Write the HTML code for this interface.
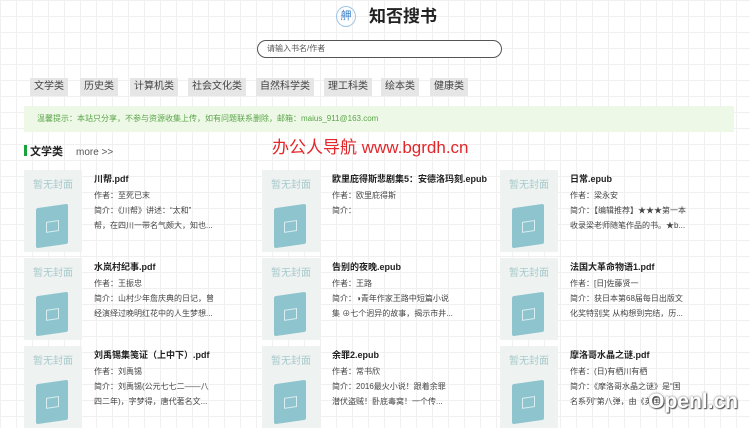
<!DOCTYPE html>
<html><head><meta charset="utf-8"><style>
*{margin:0;padding:0;box-sizing:border-box}
body{width:750px;height:420px;overflow:hidden;position:relative;font-family:"Liberation Sans","Noto Sans CJK SC",sans-serif;color:#333;
background-color:#fff;background-image:linear-gradient(#f0f0f0 1px,transparent 1px),linear-gradient(90deg,#f0f0f0 1px,transparent 1px);background-size:16px 16px}
.abs{position:absolute}
.logo{left:336px;top:6px;width:20px;height:21px;border:1px solid #9cc3e6;border-radius:50%;font-size:11px;color:#3a7fc8;text-align:center;line-height:19px}
.title{left:369px;top:6px;font-size:17px;font-weight:bold;color:#222;line-height:22px}
.search{left:257px;top:40px;width:245px;height:18px;border:1px solid #555;border-radius:9px;font-size:8px;color:#555;padding-left:9px;line-height:16px;background:#fff}
.cat{top:78px;height:18px;background:#e6e6e6;font-size:10px;color:#444;line-height:18px;padding:0 4px}
.notice{left:24px;top:106px;width:710px;height:26px;background:#eef8e6;font-size:8px;color:#5aa64a;line-height:26px;padding-left:13px}
.red{left:272px;top:137px;font-size:17px;color:#e3262a;line-height:22px}
.sec{left:24px;top:145px;font-size:11px;font-weight:bold;color:#222;line-height:14px}
.sec i{display:inline-block;width:3px;height:11px;background:#1aa33a;vertical-align:-1px;margin-right:3px}
.more{left:76px;top:146px;font-size:10px;color:#555;line-height:14px}
.card{width:230px;height:82px}
.cover{position:absolute;left:0;top:0;width:58px;height:82px;background:#eef3f1;overflow:hidden}
.cover .t{position:absolute;left:0;top:6px;width:58px;text-align:center;font-size:10px;color:#a8c9cc}
.cover .b{position:absolute;left:12px;top:36px;width:32px;height:40px;background:#8ec4cd;border-radius:2px;transform:skewY(-8deg)}
.cover .b:after{content:"";position:absolute;left:10px;top:15px;width:11px;height:9px;border:1px solid #d8eef0}
.info{position:absolute;left:70px;top:0;width:140px;font-size:8px;color:#444;line-height:15px;white-space:nowrap}
.info b{display:block;font-size:9px;color:#222;margin:3px 0 2px;line-height:13px}
.wm{right:12px;bottom:6px;font-size:21px;color:#fff;font-weight:bold;text-shadow:0 0 2px #666,1px 1px 1px #444}
</style></head><body>
<div class="abs logo">舺</div>
<div class="abs title">知否搜书</div>
<div class="abs search">请输入书名/作者</div>
<div class="abs cat" style="left:30px">文学类</div>
<div class="abs cat" style="left:80px">历史类</div>
<div class="abs cat" style="left:130px">计算机类</div>
<div class="abs cat" style="left:188px">社会文化类</div>
<div class="abs cat" style="left:256px">自然科学类</div>
<div class="abs cat" style="left:324px">理工科类</div>
<div class="abs cat" style="left:381px">绘本类</div>
<div class="abs cat" style="left:430px">健康类</div>
<div class="abs notice">温馨提示：本站只分享，不参与资源收集上传，如有问题联系删除，邮箱：maius_911@163.com</div>
<div class="abs red">办公人导航 www.bgrdh.cn</div>
<div class="abs sec"><i></i>文学类</div>
<div class="abs more">more &gt;&gt;</div>

<div class="abs card" style="left:24px;top:170px"><div class="cover"><div class="t">暂无封面</div><div class="b"></div></div><div class="info"><b>川帮.pdf</b>作者：至死已末<br>简介：《川帮》讲述：“太和”<br>帮，在四川一带名气颇大，知也...</div></div>
<div class="abs card" style="left:262px;top:170px"><div class="cover"><div class="t">暂无封面</div><div class="b"></div></div><div class="info" style="width:170px"><b>欧里庇得斯悲剧集5：安德洛玛刻.epub</b>作者：欧里庇得斯<br>简介：</div></div>
<div class="abs card" style="left:500px;top:170px"><div class="cover"><div class="t">暂无封面</div><div class="b"></div></div><div class="info"><b>日常.epub</b>作者：梁永安<br>简介：【编辑推荐】★★★第一本<br>收录梁老师随笔作品的书。★b...</div></div>

<div class="abs card" style="left:24px;top:258px"><div class="cover"><div class="t">暂无封面</div><div class="b"></div></div><div class="info"><b>水岚村纪事.pdf</b>作者：王振忠<br>简介：山村少年詹庆典的日记，曾<br>经演绎过晚明红花中的人生梦想...</div></div>
<div class="abs card" style="left:262px;top:258px"><div class="cover"><div class="t">暂无封面</div><div class="b"></div></div><div class="info"><b>告别的夜晚.epub</b>作者：王路<br>简介：◑青年作家王路中短篇小说<br>集 ⊕七个迥异的故事，揭示市井...</div></div>
<div class="abs card" style="left:500px;top:258px"><div class="cover"><div class="t">暂无封面</div><div class="b"></div></div><div class="info"><b>法国大革命物语1.pdf</b>作者：[日]佐藤贤一<br>简介：获日本第68届每日出版文<br>化奖特别奖 从构想到完结，历...</div></div>

<div class="abs card" style="left:24px;top:346px"><div class="cover"><div class="t">暂无封面</div><div class="b"></div></div><div class="info"><b>刘禹锡集笺证（上中下）.pdf</b>作者：刘禹锡<br>简介：刘禹锡(公元七七二——八<br>四二年)，字梦得，唐代著名文...</div></div>
<div class="abs card" style="left:262px;top:346px"><div class="cover"><div class="t">暂无封面</div><div class="b"></div></div><div class="info"><b>余罪2.epub</b>作者：常书欣<br>简介：2016最火小说！跟着余罪<br>潜伏盗贼！卧底毒窝！一个传...</div></div>
<div class="abs card" style="left:500px;top:346px"><div class="cover"><div class="t">暂无封面</div><div class="b"></div></div><div class="info"><b>摩洛哥水晶之谜.pdf</b>作者：(日)有栖川有栖<br>简介：《摩洛哥水晶之谜》是“国<br>名系列”第八弹，由《英国...</div></div>
<div class="abs wm">Openl.cn</div>
</body></html>
